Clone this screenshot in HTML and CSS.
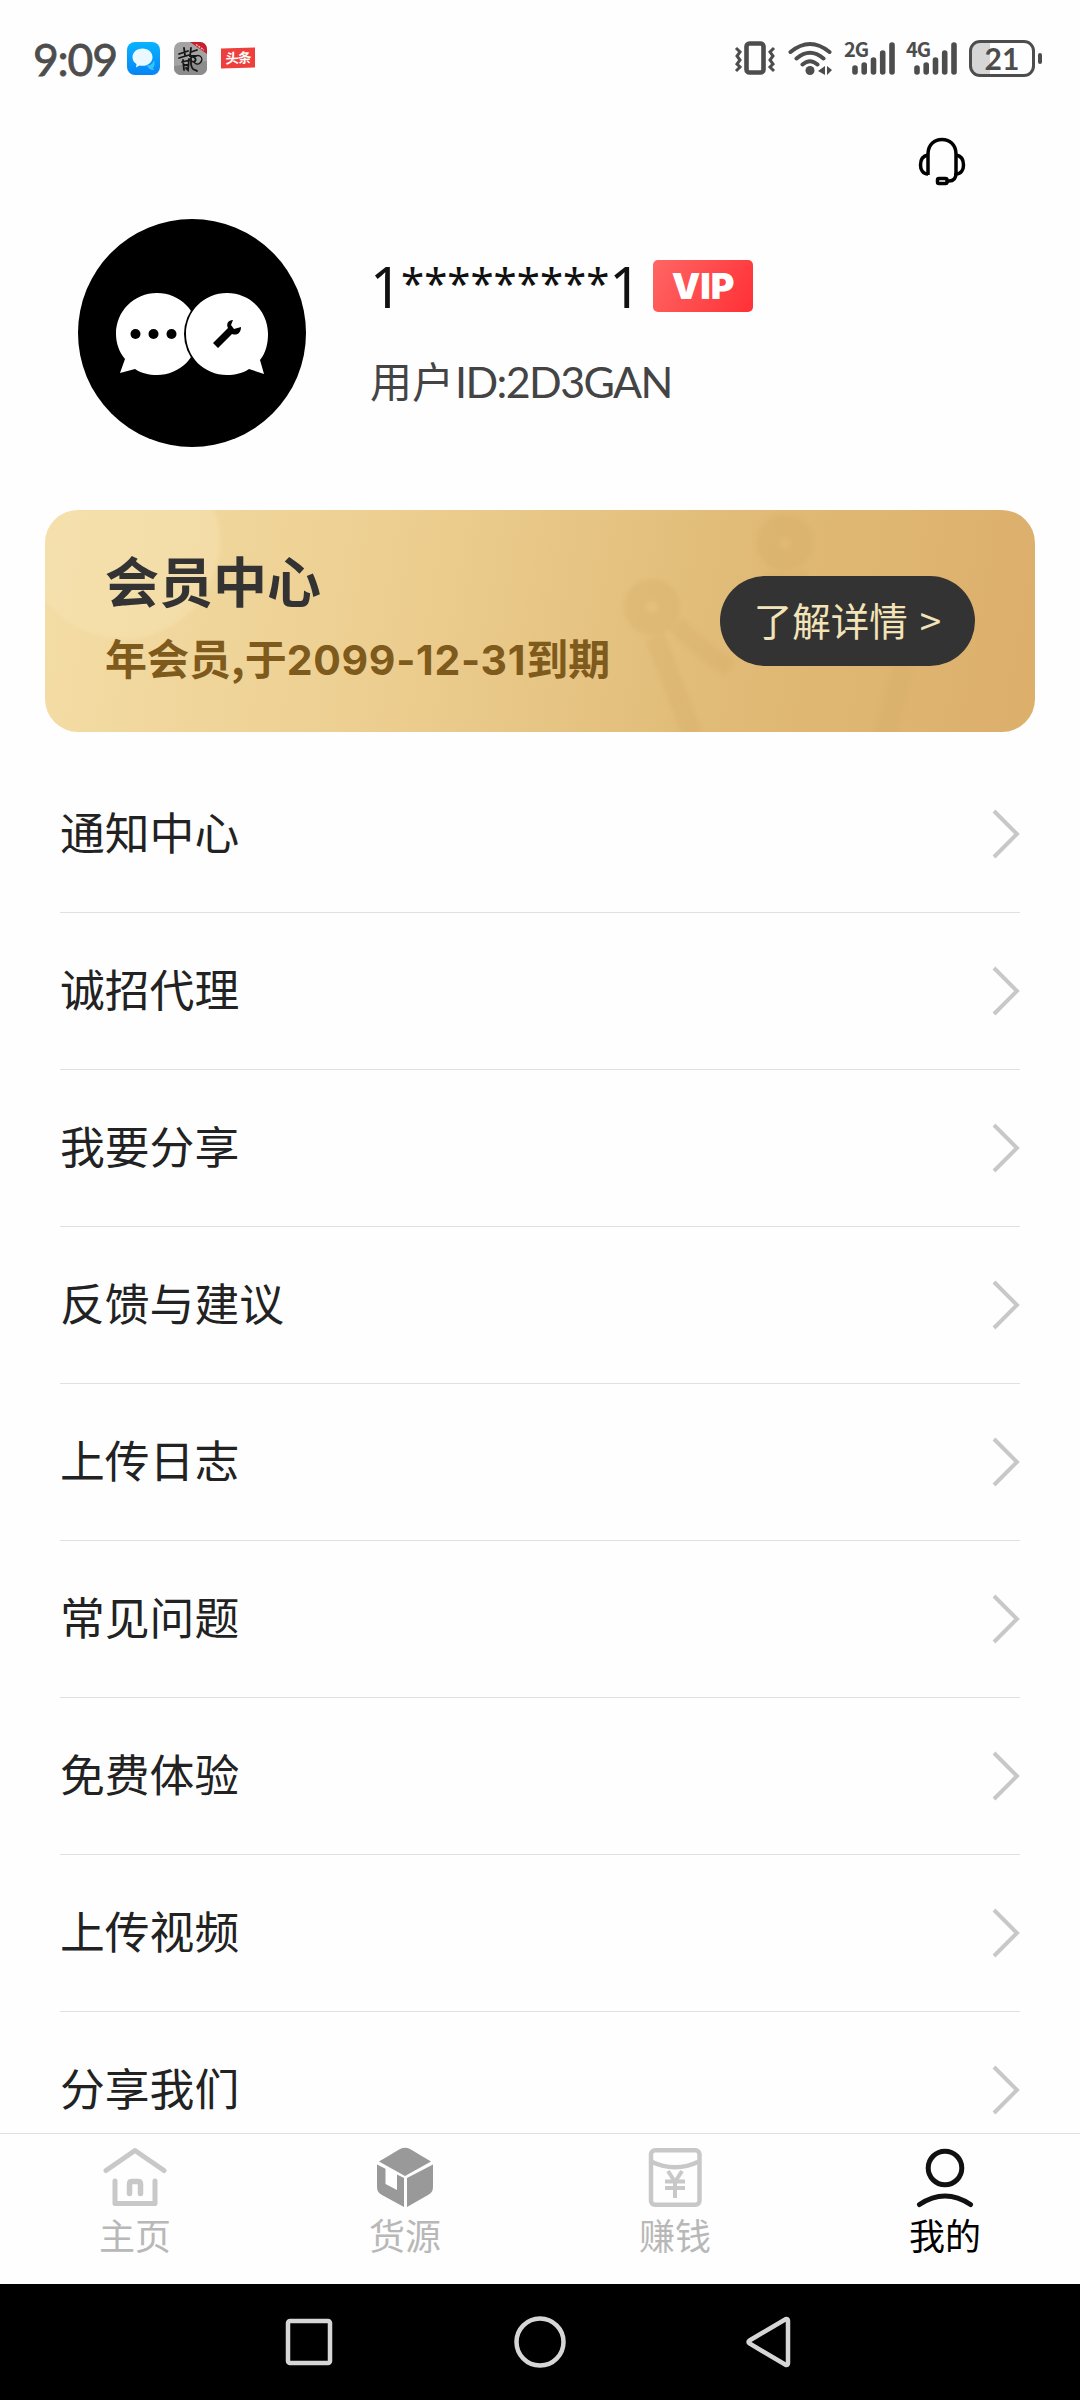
FILE: index.html
```html
<!DOCTYPE html>
<html lang="zh-CN">
<head>
<meta charset="utf-8">
<title>我的</title>
<link rel="stylesheet" href="styles.css">
</head>
<body>
<div class="screen">
  <header class="status">
    <div class="status-left">
      <span class="clock">9:09</span>
      <svg class="app" width="33" height="33" viewBox="0 0 33 33">
        <defs><linearGradient id="blue" x1="0" y1="0" x2="0" y2="1"><stop offset="0" stop-color="#08b4ff"/><stop offset="1" stop-color="#0784f5"/></linearGradient></defs>
        <rect width="33" height="33" rx="8" fill="url(#blue)"/>
        <path d="M20 23c3 1 6-1 7-5 1 3 1 6-1 8l1 2c-3 0-6-1-7-5z" fill="#35c3fb"/>
        <path d="M15.500 6.500c6 0 10 4 10 8.700s-4 8.600-10 8.600c-1 0-2-.1-3-.4L9 25.500l.5-3.500C7 20.500 5.500 18 5.500 15.200c0-4.700 4-8.700 10-8.700z" fill="#eaf8ff"/>
      </svg>
      <svg class="app" width="33" height="33" viewBox="0 0 33 33">
        <defs><clipPath id="round"><rect width="33" height="33" rx="7"/></clipPath></defs>
        <g clip-path="url(#round)">
          <rect width="33" height="33" fill="#a3a3a3"/>
          <path d="M0 24l33-5v14H0z" fill="#8c8c8c"/>
          <path d="M16 0h17v12z" fill="#c5202b"/>
          <path d="M22 2.500l8 5.500" stroke="#f0b9b5" stroke-width="1.500" stroke-dasharray="2 1"/>
          <g fill="none" stroke="#161616" stroke-width="1.800" stroke-linecap="round">
            <path d="M5 12l9-3M10 6l1 7M5 16l10-3M8 20l8-2M9 18l1 10M15 17l-1 11-2-2M10 23h4"/>
            <path d="M17 6l-1 8 6 0M17 10l6-2M16 14c6 1 7 4 4 6l-3-1M17 15v7c1 8 5 5 6 7"/>
            <path d="M21 14c6-2 9 3 5 7-2 2-5 1-6-1" stroke-width="1.300"/>
          </g>
        </g>
      </svg>
      <span class="news">头条</span>
    </div>
    <div class="status-right">
      <svg width="42" height="36" viewBox="0 0 42 36" fill="none" stroke="#4d4d4d">
        <rect x="12.500" y="3.500" width="17" height="29" rx="3" stroke-width="4.600"/>
        <path d="M2 8l4 4-3 4 3 4-3 4 3 3-4 4M40 8l-4 4 3 4-3 4 3 4-3 3 4 4" stroke-width="3"/>
      </svg>
      <svg width="45" height="36" viewBox="0 0 45 36">
        <g fill="none" stroke="#4d4d4d" stroke-width="4" stroke-linecap="round"><path d="M2.500 12Q22 -4 41.500 12M8.500 18.500Q22 7 35.500 18.500M14.500 24.500Q22 18 29.500 24.500"/></g>
        <circle cx="22" cy="30.500" r="4.500" fill="#4d4d4d"/>
        <path d="M37 26v9l-7-4zM39 26v9l5-5z" fill="#4d4d4d"/>
      </svg>
      <div class="signal"><span>2G</span>
        <svg width="50" height="36" viewBox="0 0 50 36" stroke="#4d4d4d" stroke-width="5.600" stroke-linecap="round"><path d="M10 28v4M19.200 25v7M28.500 20v12M37.700 13v19M47 5v27"/></svg>
      </div>
      <div class="signal"><span>4G</span>
        <svg width="50" height="36" viewBox="0 0 50 36" stroke="#4d4d4d" stroke-width="5.600" stroke-linecap="round"><path d="M10 28v4M19.200 25v7M28.500 20v12M37.700 13v19M47 5v27"/></svg>
      </div>
      <div class="battery"><span class="cell">21</span><span class="nub"></span></div>
    </div>
  </header>

  <div class="toolbar">
    <svg width="48" height="50" viewBox="0 0 48 50" fill="none" stroke="#000" stroke-width="3.500">
      <path d="M10 38V17C10 -2.500 38 -2.500 38 17V38"/>
      <path d="M10 18C4 19 2.500 24 2.500 28s2 9 7.500 9M38 18c6 1 7.500 6 7.500 10s-2 9-7.500 9"/>
      <path d="M38 36c0 5-2 8-7 8h-2"/><rect x="19.500" y="41.500" width="9.500" height="5" rx="1.500"/>
    </svg>
  </div>

  <section class="profile">
    <svg class="avatar" width="228" height="228" viewBox="0 0 228 228">
      <circle cx="114" cy="114" r="114" fill="#000"/>
      <path d="M79 74c23 0 41 18 41 41s-18 41-41 41c-8 0-16-2-22-6l-15 4 5-14c-6-7-9-16-9-25 0-23 18-41 41-41z" fill="#fff"/>
      <circle cx="149" cy="115" r="43" fill="#000"/>
      <path d="M149 74c-23 0-41 18-41 41s18 41 41 41c8 0 16-2 22-6l15 5-4-14c6-7 8-17 8-26 0-23-18-41-41-41z" fill="#fff"/>
      <circle cx="57.500" cy="115" r="5"/><circle cx="75.500" cy="115" r="5"/><circle cx="93.500" cy="115" r="5"/>
      <path d="M135 124l15-15c-2-4 0-8 5-8l-2 5 3 4 7-2c0 6-4 9-9 7l-14 14z"/>
    </svg>
    <div class="who">
      <div class="name-row"><span class="name">1<span>*********</span>1</span><span class="vip">VIP</span></div>
      <div class="uid">用户<span>ID:2D3GAN</span></div>
    </div>
  </section>

  <section class="card">
    <svg class="card-art" width="990" height="222" viewBox="0 0 990 222">
      <circle class="glow" cx="78" cy="32" r="97" fill="#f7e5b5" opacity=".45"/>
      <g class="crown" fill="none" stroke="#d3aa66" stroke-opacity=".32">
        <circle cx="607" cy="97" r="17" stroke-width="22"/>
        <circle cx="740" cy="33" r="17" stroke-width="22"/>
        <path d="M610 127L648 226M858 157L840 226" stroke-width="20"/>
        <path d="M631 114Q655 140 685 158" stroke-width="18"/>
        <path d="M742 62v20" stroke-width="42"/>
      </g>
    </svg>
    <div class="card-text">
      <h2>会员中心</h2>
      <p>年会员,于<span>2099-12-31</span>到期</p>
    </div>
    <div class="more">了解详情<span>&gt;</span></div>
  </section>

  <ul class="menu">
    <li><span>通知中心</span><svg class="chev" viewBox="0 0 28 50"><path d="M2 2L25 25L2 48"/></svg></li>
    <li><span>诚招代理</span><svg class="chev" viewBox="0 0 28 50"><path d="M2 2L25 25L2 48"/></svg></li>
    <li><span>我要分享</span><svg class="chev" viewBox="0 0 28 50"><path d="M2 2L25 25L2 48"/></svg></li>
    <li><span>反馈与建议</span><svg class="chev" viewBox="0 0 28 50"><path d="M2 2L25 25L2 48"/></svg></li>
    <li><span>上传日志</span><svg class="chev" viewBox="0 0 28 50"><path d="M2 2L25 25L2 48"/></svg></li>
    <li><span>常见问题</span><svg class="chev" viewBox="0 0 28 50"><path d="M2 2L25 25L2 48"/></svg></li>
    <li><span>免费体验</span><svg class="chev" viewBox="0 0 28 50"><path d="M2 2L25 25L2 48"/></svg></li>
    <li><span>上传视频</span><svg class="chev" viewBox="0 0 28 50"><path d="M2 2L25 25L2 48"/></svg></li>
    <li><span>分享我们</span><svg class="chev" viewBox="0 0 28 50"><path d="M2 2L25 25L2 48"/></svg></li>
  </ul>

  <nav class="tabs">
    <div class="tab">
      <svg width="64" height="62" viewBox="0 0 64 62" fill="none" stroke="#c8c8c8" stroke-width="5" stroke-linecap="round" stroke-linejoin="round">
        <path d="M3 24.500L32 4.500L61 24.500"/><path d="M12 35V57.500H52V35"/><path d="M26.500 47.500V38q0-2.500 2.500-2.500h6q2.500 0 2.500 2.500v9.500" stroke-width="5.500"/>
      </svg>主页
    </div>
    <div class="tab">
      <svg width="64" height="62" viewBox="0 0 64 62" fill="#999">
        <path d="M6 15.500L27 3q5-2.500 10 0L58 15.500 32 30z"/>
        <path d="M4 18.500L31 32V61L9 49q-5-2.500-5-8z"/><path d="M60 18.500L34 32V61L55 49q5-2.500 5-8z"/>
        <path d="M12.500 21.500L24 27V44L12.500 38z" fill="#fff"/>
      </svg>货源
    </div>
    <div class="tab">
      <svg width="64" height="62" viewBox="0 0 64 62" fill="none" stroke="#c8c8c8" stroke-width="4.500">
        <rect x="8" y="4.300" width="48.500" height="54.500" rx="4"/><path d="M8 15.500Q32 27 56 15.500"/>
        <path d="M25 25l7 11 7-11M32 35v17M22 35.500h20M22 42h20" stroke-width="4"/>
      </svg>赚钱
    </div>
    <div class="tab active">
      <svg width="64" height="62" viewBox="0 0 64 62" fill="none" stroke="#111" stroke-width="5" stroke-linecap="round">
        <circle cx="32" cy="22" r="16.800"/><path d="M6.500 58.500Q32 41.500 57.500 58.500"/>
      </svg>我的
    </div>
  </nav>

  <footer class="sysnav">
    <svg width="52" height="52" viewBox="0 0 52 52"><rect x="5" y="5" width="42" height="42" rx="2"/></svg>
    <svg width="52" height="52" viewBox="0 0 52 52"><circle cx="26" cy="26" r="23.500"/></svg>
    <svg width="52" height="52" viewBox="0 0 52 52"><path d="M4.500 24.500L40.500 3.200q2.500-1 2.500 1.500V47.300q0 2.500-2.500 1.500L4.500 27.500q-2-1.500 0-3z"/></svg>
  </footer>
</div>
</body>
</html>
```
FILE: styles.css
```css
* { box-sizing: border-box; margin: 0; padding: 0; }
body { background: #fff; font-family: Lato, "Noto Sans CJK SC", sans-serif; }
svg { display: block; flex: none; }
.screen { width: 1080px; height: 2400px; display: flex; flex-direction: column; overflow: hidden; background: #fefefe; }

.status { height: 116px; padding: 0 38px 0 33px; display: flex; justify-content: space-between; align-items: center; flex: none; }
.status-left, .status-right { display: flex; align-items: center; }
.clock { width: 94px; font: 400 44.500px/50px Lato, sans-serif; letter-spacing: -1.2px; color: #4d4d4d; padding-top: 2px; -webkit-text-stroke: .8px #4d4d4d; }
.app { margin-right: 14px; }
.news { width: 34px; height: 20px; background: #ed403c; color: #fff; font: 700 13.500px/19px "Noto Sans CJK SC", sans-serif; text-align: center; letter-spacing: -1px; transform: skewY(-2deg); }
.status-right { gap: 12px; }
.signal { display: grid; width: 50px; height: 36px; }
.signal > * { grid-area: 1 / 1; }
.signal span { font: 700 20px/18px "Noto Sans CJK SC", sans-serif; color: #4d4d4d; letter-spacing: -1px; margin-left: -1px; }
.battery { display: flex; align-items: center; gap: 3px; }
.cell { width: 66px; height: 37px; border: 3px solid #4d4d4d; border-radius: 11px; background: linear-gradient(90deg, #d6d6d6 18px, transparent 18px); font: 700 30px/31px Lato, sans-serif; color: #4d4d4d; text-align: center; }
.nub { width: 4px; height: 11px; border-radius: 2px; background: #4d4d4d; }

.toolbar { height: 103px; padding: 21px 114px 0 0; display: flex; justify-content: flex-end; flex: none; }

.profile { height: 291px; padding-left: 78px; display: flex; gap: 64px; flex: none; }
.who { padding-top: 35px; }
.name-row { display: flex; align-items: center; height: 64px; }
.name { width: 283px; font: 400 56px/64px "Noto Sans", sans-serif; letter-spacing: -1px; color: #111; white-space: nowrap; }
.name span { font-size: 42px; line-height: 1; letter-spacing: 0; vertical-align: 9px; }
.vip { width: 100px; height: 52px; border-radius: 5px; background: linear-gradient(120deg, #ff6664, #ff3036); color: #fff; font: 900 36px/53px Inter, sans-serif; text-align: center; }
.uid { margin-top: 32px; font: 400 42px/60px "Noto Sans CJK SC", sans-serif; color: #444; white-space: nowrap; }
.uid span { font-family: Lato, sans-serif; font-size: 43px; letter-spacing: -1.600px; margin-left: 1px; }

.card { position: relative; height: 222px; margin: 0 45px; padding: 0 60px 0 60px; border-radius: 33px; overflow: hidden; background: linear-gradient(100deg, #f4dda6, #ebcc8d 40%, #e0ba76 70%, #dcaf6b); display: flex; justify-content: space-between; align-items: center; flex: none; }
.card-art { position: absolute; left: 0; top: 0; }
.glow { filter: blur(2px); }
.crown { filter: blur(2px); }
.card-text, .more { position: relative; }
.card-text { padding-bottom: 9px; }
.card h2 { font: 700 54px/76px "Noto Sans CJK SC", sans-serif; color: #333; }
.card p { font: 700 42px/62px "Noto Sans CJK SC", sans-serif; color: #7e5a1c; margin-top: 8px; white-space: nowrap; }
.card p span { font-family: Inter, sans-serif; font-size: 41px; letter-spacing: .7px; }
.more { width: 255px; height: 90px; border-radius: 45px; background: #333; color: #f3e3b8; display: flex; justify-content: center; gap: 12px; font: 400 38.500px/86px "Noto Sans CJK SC", sans-serif; }

.menu { list-style: none; height: 1401px; padding: 24px 60px 0; overflow: hidden; flex: none; }
.menu li { height: 157px; border-bottom: 1px solid #e0e0e0; display: flex; align-items: center; justify-content: space-between; font: 400 44.800px/60px "Noto Sans CJK SC", sans-serif; color: #222; }
.menu span { padding-bottom: 6px; }
.chev { width: 28px; height: 50px; fill: none; stroke: #c8c8c8; stroke-width: 4; }

.tabs { height: 151px; border-top: 1px solid #e0e0e0; display: grid; grid-template-columns: repeat(4, 1fr); flex: none; }
.tab { padding-top: 12px; display: flex; flex-direction: column; align-items: center; font: 400 36px/50px "Noto Sans CJK SC", sans-serif; color: #b8b8b8; }
.tab svg { margin-bottom: 1px; }
.tab.active { color: #000; }

.sysnav { height: 116px; background: #000; display: flex; justify-content: center; align-items: center; gap: 179px; flex: none; }
.sysnav svg { fill: none; stroke: #d6d6d6; stroke-width: 4.500; }
```
